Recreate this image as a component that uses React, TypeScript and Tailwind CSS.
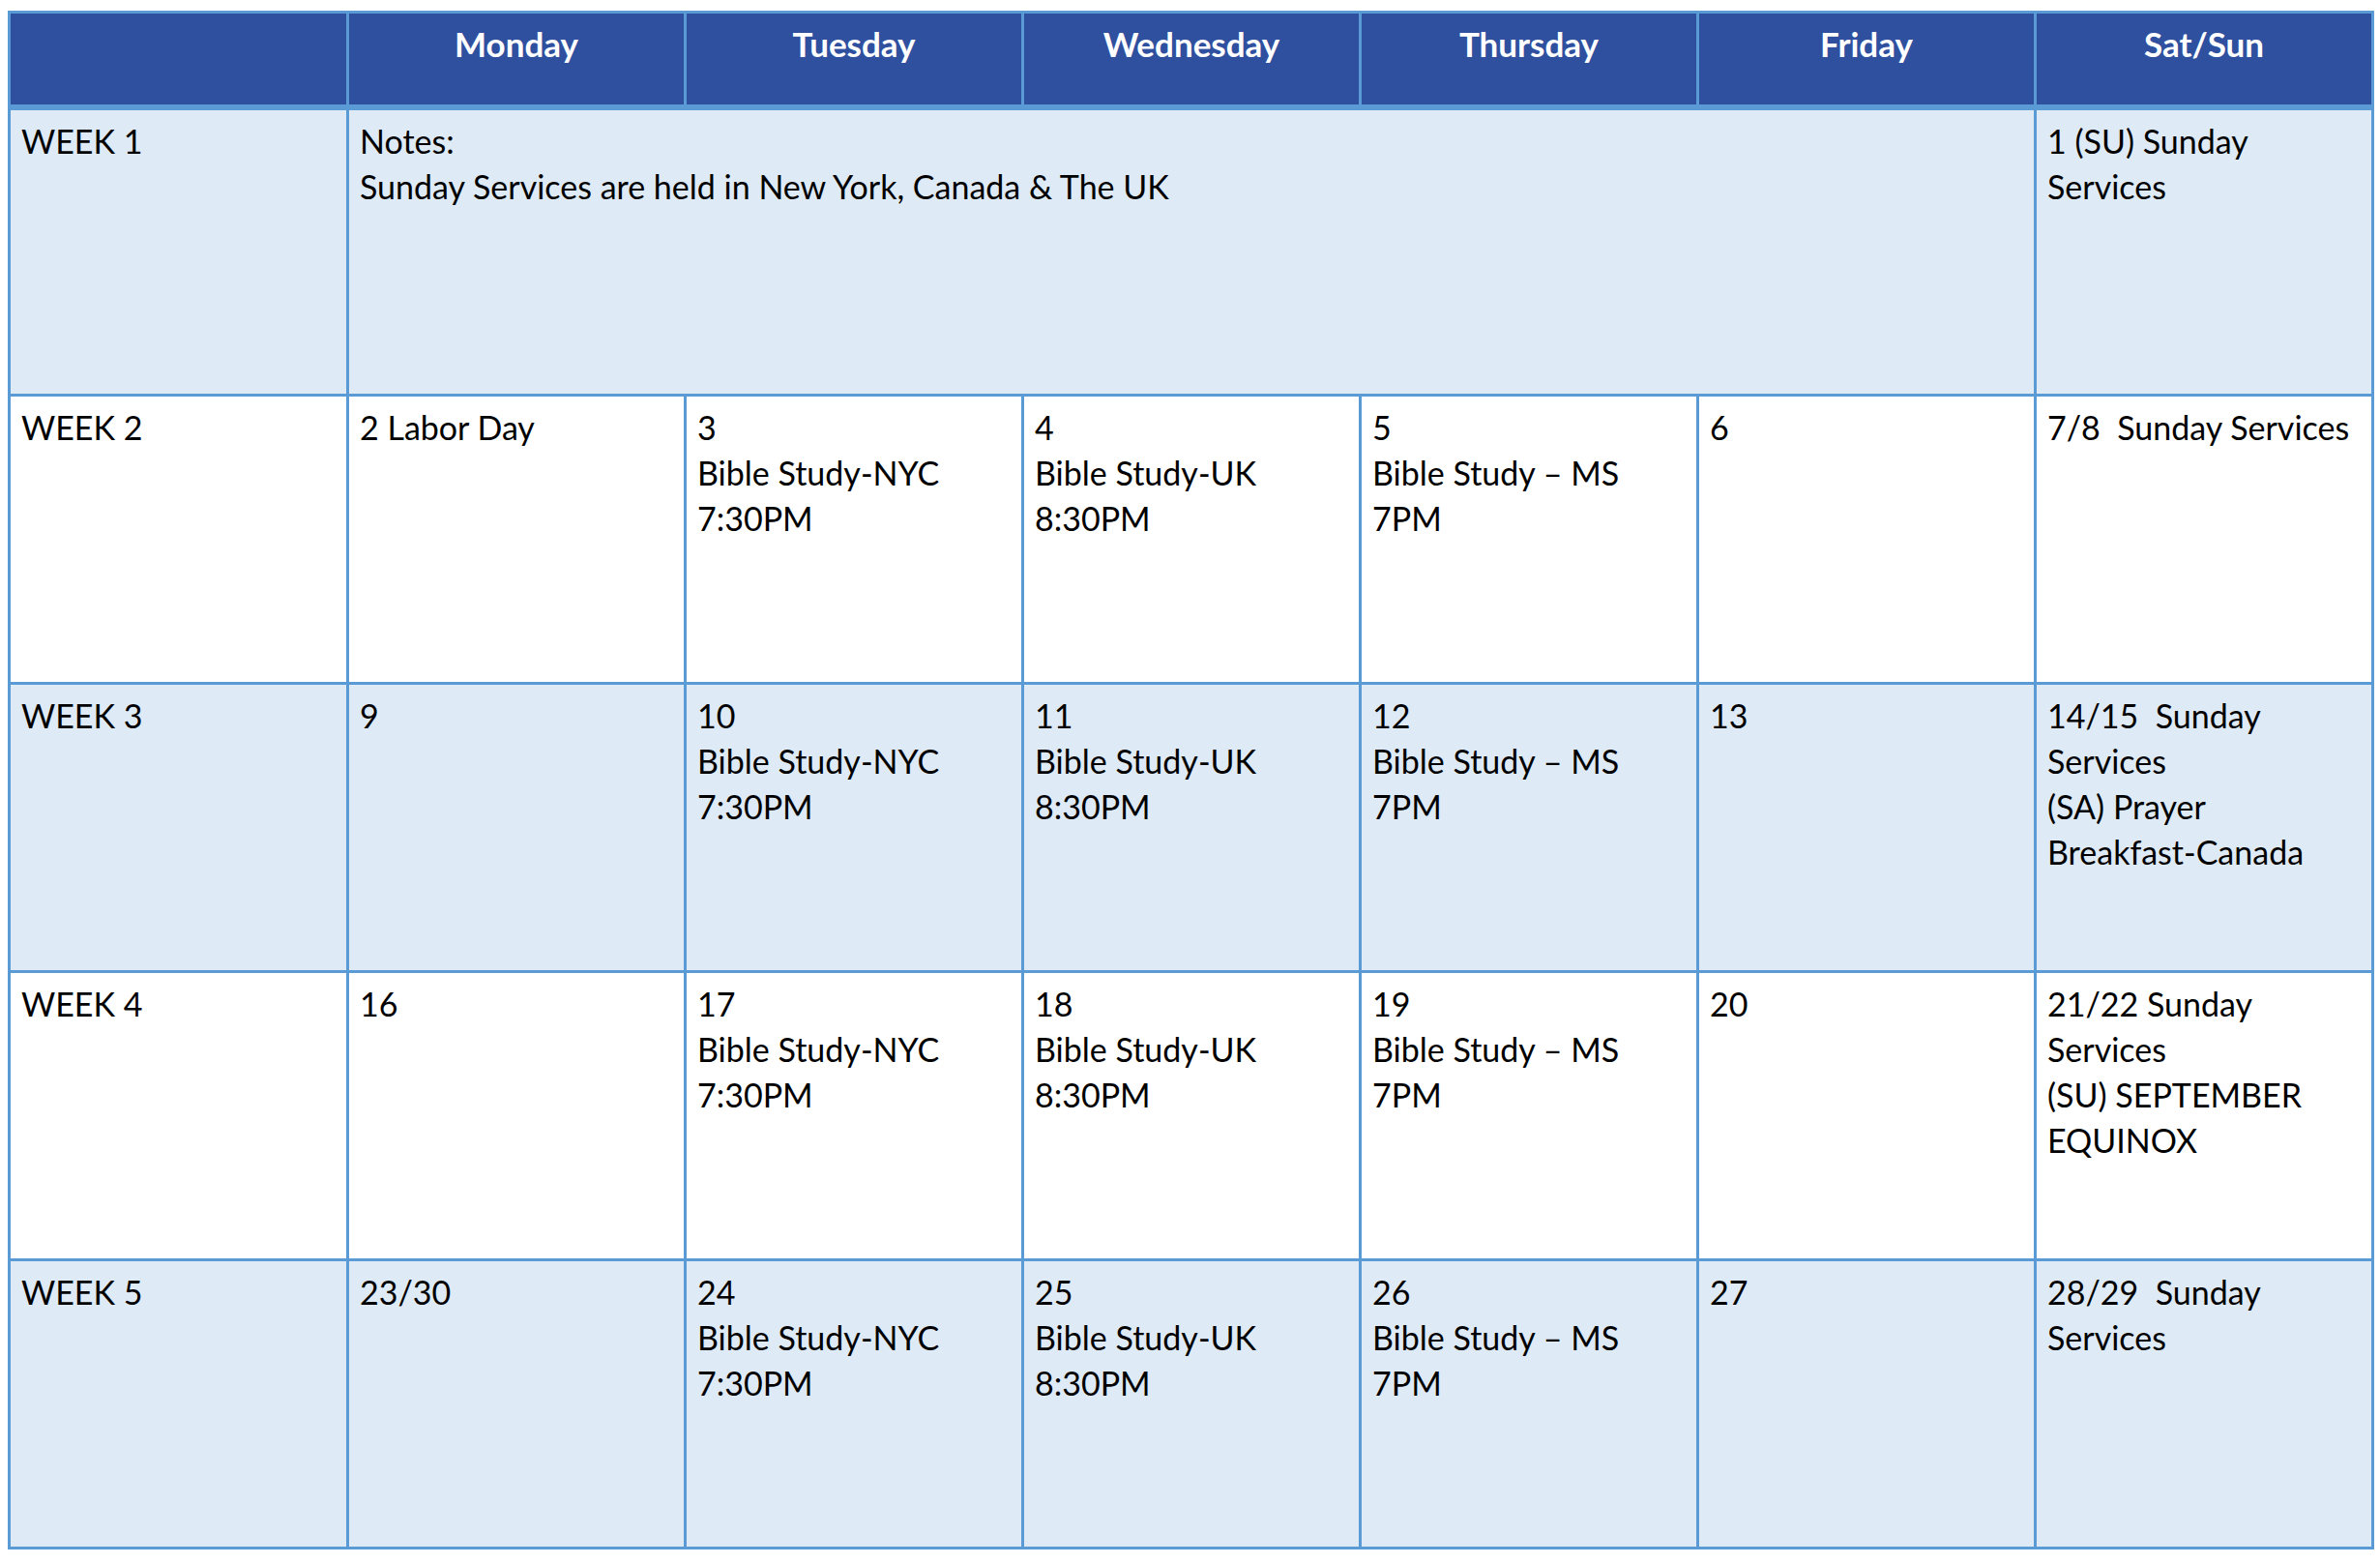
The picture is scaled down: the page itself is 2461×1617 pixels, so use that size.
import React from 'react';

type Row = { week: string; cells: string[][]; shaded: boolean };

const days = ['Monday', 'Tuesday', 'Wednesday', 'Thursday', 'Friday', 'Sat/Sun'];

const rows: Row[] = [
  {
    week: 'WEEK 2',
    shaded: false,
    cells: [
      ['2 Labor Day'],
      ['3', 'Bible Study-NYC', '7:30PM'],
      ['4', 'Bible Study-UK', '8:30PM'],
      ['5', 'Bible Study – MS', '7PM'],
      ['6'],
      ['7/8  Sunday Services'],
    ],
  },
  {
    week: 'WEEK 3',
    shaded: true,
    cells: [
      ['9'],
      ['10', 'Bible Study-NYC', '7:30PM'],
      ['11', 'Bible Study-UK', '8:30PM'],
      ['12', 'Bible Study – MS', '7PM'],
      ['13'],
      ['14/15  Sunday', 'Services', '(SA) Prayer', 'Breakfast-Canada'],
    ],
  },
  {
    week: 'WEEK 4',
    shaded: false,
    cells: [
      ['16'],
      ['17', 'Bible Study-NYC', '7:30PM'],
      ['18', 'Bible Study-UK', '8:30PM'],
      ['19', 'Bible Study – MS', '7PM'],
      ['20'],
      ['21/22 Sunday', 'Services', '(SU) SEPTEMBER', 'EQUINOX'],
    ],
  },
  {
    week: 'WEEK 5',
    shaded: true,
    cells: [
      ['23/30'],
      ['24', 'Bible Study-NYC', '7:30PM'],
      ['25', 'Bible Study-UK', '8:30PM'],
      ['26', 'Bible Study – MS', '7PM'],
      ['27'],
      ['28/29  Sunday', 'Services'],
    ],
  },
];

const cell = 'border-[3px] border-[#5B9BD5] align-top pl-[11px] pr-[6px] pt-[8px] whitespace-pre';

function Lines({ lines }: { lines: string[] }) {
  return (
    <>
      {lines.map((l, i) => (
        <div key={i}>{l}</div>
      ))}
    </>
  );
}

export default function App() {
  return (
    <div className="min-h-screen bg-white pl-[8px] pt-[11px] text-black" style={{ fontFamily: 'Lato, "Open Sans", sans-serif' }}>
      <table className="table-fixed border-collapse w-[2447px] text-[34px] leading-[47px]">
        <colgroup>
          <col className="w-[350px]" />
          {days.map((d) => (
            <col key={d} className="w-[349px]" />
          ))}
        </colgroup>
        <thead>
          <tr className="h-[98px] bg-[#2F4F9F]">
            <th className={`${cell} border-b-[6px]`}></th>
            {days.map((d) => (
              <th key={d} className={`${cell} border-b-[6px] pr-[11px] text-center text-[35px] font-bold text-white`}>
                {d}
              </th>
            ))}
          </tr>
        </thead>
        <tbody>
          <tr className="h-[298px] bg-[#DEEAF6]">
            <td className={cell}>WEEK 1</td>
            <td className={cell} colSpan={5}>
              <div>Notes:</div>
              <div>Sunday Services are held in New York, Canada &amp; The UK</div>
            </td>
            <td className={cell}>
              <Lines lines={['1 (SU) Sunday', 'Services']} />
            </td>
          </tr>
          {rows.map((r) => (
            <tr key={r.week} className={`h-[298px] ${r.shaded ? 'bg-[#DEEAF6]' : 'bg-white'}`}>
              <td className={cell}>{r.week}</td>
              {r.cells.map((c, i) => (
                <td key={i} className={cell}>
                  <Lines lines={c} />
                </td>
              ))}
            </tr>
          ))}
        </tbody>
      </table>
    </div>
  );
}
